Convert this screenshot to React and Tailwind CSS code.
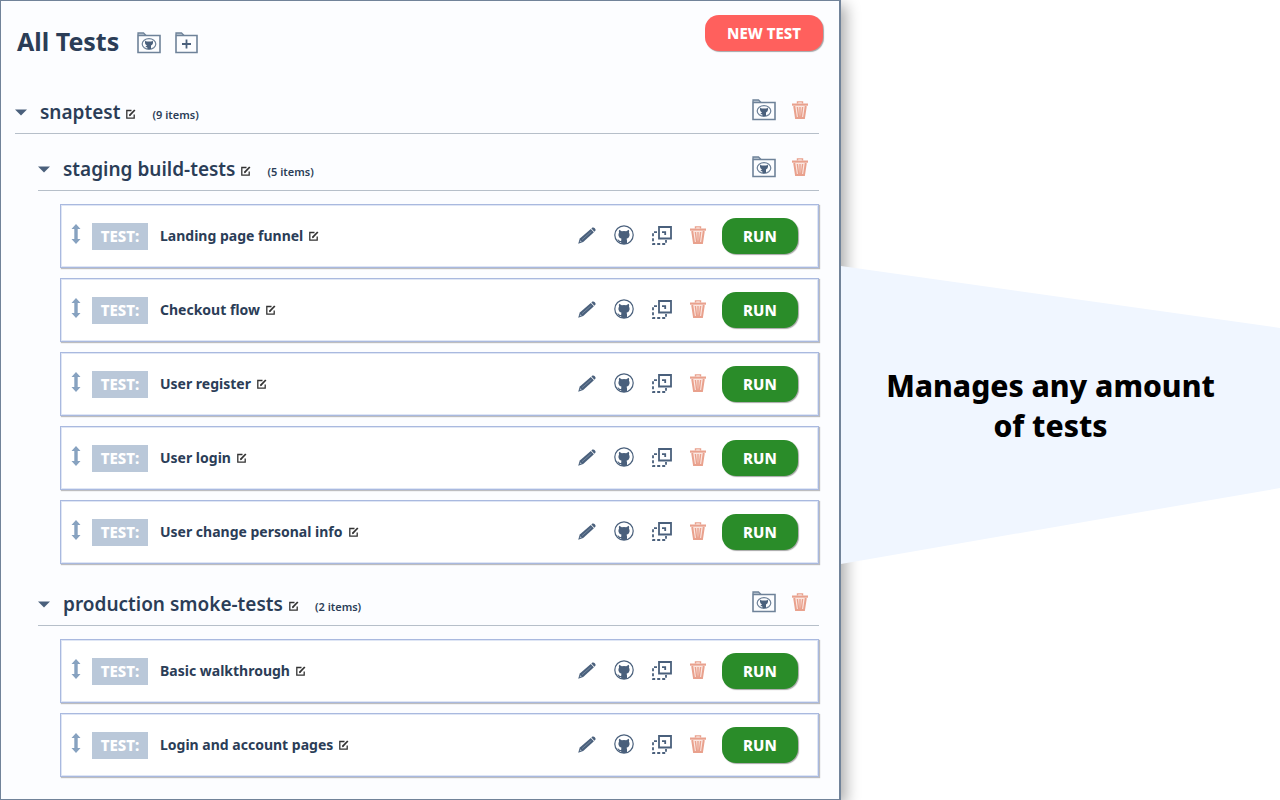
import React from "react";

const groups = [
  {
    name: "staging build-tests",
    tests: [
      "Landing page funnel",
      "Checkout flow",
      "User register",
      "User login",
      "User change personal info",
    ],
  },
  {
    name: "production smoke-tests",
    tests: ["Basic walkthrough", "Login and account pages"],
  },
];

function FolderGithubIcon() {
  return (
    <svg width="24" height="22" viewBox="0 0 24 22" fill="none" stroke="#6e8299">
      <path d="M1 3V1H6.500L9 3.500" fill="#c3cdd8" strokeWidth="1.300" />
      <path d="M1 3.500H23V20.500H1Z" strokeWidth="1.600" />
      <ellipse cx="12" cy="12" rx="6.800" ry="5.300" strokeWidth="1.200" />
      <path
        d="M8.200 8.800 9.800 9.400H14.200L15.800 8.800Q16.700 12.600 14 13.400V17H10.400V15.500L8.400 14.800 10 13.400Q7.300 12.600 8.200 8.800Z"
        fill="#4a607c"
        stroke="none"
      />
    </svg>
  );
}

function FolderPlusIcon() {
  return (
    <svg width="23" height="22" viewBox="0 0 23 22" fill="none" stroke="#6e8299">
      <path d="M1 3V1H6.500L9 3.500" fill="#c3cdd8" strokeWidth="1.300" />
      <path d="M1 3.500H22V20.500H1Z" strokeWidth="1.600" />
      <path d="M11.500 7.500V16.500M7 12H16" stroke="#4a607c" strokeWidth="1.800" />
    </svg>
  );
}

function TrashIcon() {
  return (
    <svg width="16" height="18" viewBox="0 0 16 18" fill="none" stroke="#e9a18d">
      <path d="M5.500 2.500V0.900H10.500V2.500" strokeWidth="1.400" />
      <path d="M0 3.600H16" strokeWidth="2.200" />
      <path d="M2.200 5 4 17H12L13.800 5" fill="#fbe6e0" strokeWidth="2" />
      <path d="M5.400 6 6.600 16M8 6V16M10.600 6 9.400 16" strokeWidth="1.400" />
    </svg>
  );
}

function EditIcon() {
  return (
    <svg width="10" height="10" viewBox="0 0 10 10" fill="none" stroke="#333">
      <path d="M5.500 1.500H0.800V9.200H8.200V5.500" strokeWidth="1.300" />
      <path d="M3.600 6.400 8.800 1" strokeWidth="1.800" />
      <path d="M3 7.200 3.400 5.400 4.800 6.700Z" fill="#333" stroke="none" />
    </svg>
  );
}

function PencilIcon() {
  return (
    <svg width="18" height="17" viewBox="0 0 18 17" fill="#4a607c">
      <path d="M0.200 16.800 1.800 11.600 12.800 1.900 15.900 5.200 5.200 15Z" />
      <path d="M13.400 1.400 14.400 0.600Q15.600 0 16.800 1.200 18 2.500 17.400 3.600L16.400 4.700Z" />
      <path d="M4 12.700 13.400 4.500" stroke="#8496aa" strokeWidth="0.700" />
      <path d="M1.500 15.300 2.600 13.200 3.700 14.400Z" fill="#b5c0cd" />
    </svg>
  );
}

function GithubIcon() {
  return (
    <svg width="20" height="20" viewBox="0 0 20 20" fill="#4a607c">
      <circle cx="10" cy="10" r="9.200" fill="none" stroke="#4a607c" strokeWidth="1.200" />
      <path d="M5.200 4.800 7.800 6.200Q10 5.800 12.200 6.200L14.800 4.800Q15.400 6.400 15 7.800 15.800 9 15.500 10.800 15 13.200 12.600 13.700 13 14.500 13 15.600V19H7.200V17.300Q5.200 17.600 4.400 16 3.800 14.900 3.200 14.600 4.600 14.200 5.400 15.400 6 16.200 7.200 16V15.400Q7.200 14.500 7.500 13.700 5 13.200 4.500 10.800 4.200 9 5 7.800 4.600 6.400 5.200 4.800Z" />
    </svg>
  );
}

function DuplicateIcon() {
  return (
    <svg width="20" height="19" viewBox="0 0 20 19" fill="none" stroke="#4a607c" strokeWidth="1.800">
      <path d="M7 1H19V12.500H7Z" />
      <path d="M5 6.200H1V18H14V14" strokeDasharray="3 2" />
      <path d="M10 6.200H13.200V9" />
    </svg>
  );
}

function DragIcon() {
  return (
    <svg width="10" height="20" viewBox="0 0 10 20" fill="#87a2c0">
      <path d="M5 0 9.500 5H6.700V15H9.500L5 20 0.500 15H3.300V5H0.500Z" />
    </svg>
  );
}

function IconButton({ label, children }) {
  return (
    <button type="button" aria-label={label} className="flex cursor-pointer items-center justify-center">
      {children}
    </button>
  );
}

function GroupHeader({ name, count }) {
  return (
    <div className="flex h-12 items-center justify-between border-b border-[#b6bfc9] pr-[11px]">
      <div className="flex items-baseline pt-1">
        <button
          type="button"
          aria-label={"Collapse " + name}
          className="mr-[13px] flex cursor-pointer self-center pt-0.5"
        >
          <svg width="12" height="7" viewBox="0 0 12 7" fill="#4a607c">
            <path d="M0 0.500H12L6 6.500Z" />
          </svg>
        </button>
        <h2 className="mr-1.5 text-[19px] leading-7 font-semibold">{name}</h2>
        <IconButton label={"Rename " + name}>
          <EditIcon />
        </IconButton>
        <span className="ml-4 text-[11px] font-semibold">({count} items)</span>
      </div>
      <div className="flex items-center gap-4">
        <IconButton label="Save folder to GitHub">
          <FolderGithubIcon />
        </IconButton>
        <IconButton label="Delete folder">
          <TrashIcon />
        </IconButton>
      </div>
    </div>
  );
}

function TestRow({ name }) {
  return (
    <li className="flex h-16 items-center justify-between border border-[#a9b9df] bg-white pr-5 pl-2.5 shadow-[inset_0_0_0_1px_#dfe6f5,1px_1px_1px_rgba(0,0,0,0.25)]">
      <div className="flex items-center">
        <span className="mr-[11px] pb-1">
          <DragIcon />
        </span>
        <span className="mr-3 flex h-[27px] w-14 items-center justify-center bg-[#bac8d9] text-[15px] font-extrabold text-white">
          TEST:
        </span>
        <span className="mr-1.5 text-sm font-bold">{name}</span>
        <IconButton label={"Rename " + name}>
          <EditIcon />
        </IconButton>
      </div>
      <div className="flex items-center">
        <div className="mr-4 flex items-center gap-4.5 pb-0.5">
          <IconButton label="Edit test">
            <PencilIcon />
          </IconButton>
          <IconButton label="Save test to GitHub">
            <GithubIcon />
          </IconButton>
          <IconButton label="Duplicate test">
            <DuplicateIcon />
          </IconButton>
          <IconButton label="Delete test">
            <TrashIcon />
          </IconButton>
        </div>
        <button
          type="button"
          className="h-9 w-19 cursor-pointer rounded-[14px] bg-[#2a8c29] text-[15px] font-extrabold text-white shadow-[1px_1px_1px_rgba(0,0,0,0.35)]"
        >
          RUN
        </button>
      </div>
    </li>
  );
}

export default function App() {
  return (
    <div className="flex min-h-screen bg-white font-['Noto_Sans',sans-serif] text-[#2b3d57]">
      <main className="relative w-[65.7%] border border-r-2 border-[#718399] bg-[#fcfdff] pr-4 pb-5 pl-3.5 shadow-[5px_5px_14px_rgba(0,0,0,0.33)]">
        <header className="flex h-[85px] items-start justify-between pt-3.5">
          <div className="flex items-center gap-3.5 pl-0.5">
            <h1 className="mr-1 pb-1 text-[25px] leading-13 font-bold">All Tests</h1>
            <IconButton label="New folder from GitHub">
              <FolderGithubIcon />
            </IconButton>
            <IconButton label="New folder">
              <FolderPlusIcon />
            </IconButton>
          </div>
          <button
            type="button"
            className="h-9 cursor-pointer rounded-[14px] bg-[#ff605d] px-[22px] text-[15px] font-extrabold text-white shadow-[1px_1px_1px_rgba(0,0,0,0.35)]"
          >
            NEW TEST
          </button>
        </header>

        <div className="pr-1">
          <GroupHeader name="snaptest" count={9} />
          <div className="flex flex-col gap-[5px] pl-[23px]">
            {groups.map((group) => (
              <section key={group.name} className="pt-[9px]">
                <GroupHeader name={group.name} count={group.tests.length} />
                <ul className="flex flex-col gap-2.5 pt-[13px] pl-[22px]">
                  {group.tests.map((test) => (
                    <TestRow key={test} name={test} />
                  ))}
                </ul>
              </section>
            ))}
          </div>
        </div>
      </main>

      <aside className="flex flex-1 items-center justify-center bg-[#f0f6ff] pt-3 pr-5 text-center [clip-path:polygon(0_33.25%,100%_41%,100%_61%,0_70.5%)]">
        <p className="text-[30px] leading-10 font-extrabold text-black">
          Manages any amount
          <br />
          of tests
        </p>
      </aside>
    </div>
  );
}
